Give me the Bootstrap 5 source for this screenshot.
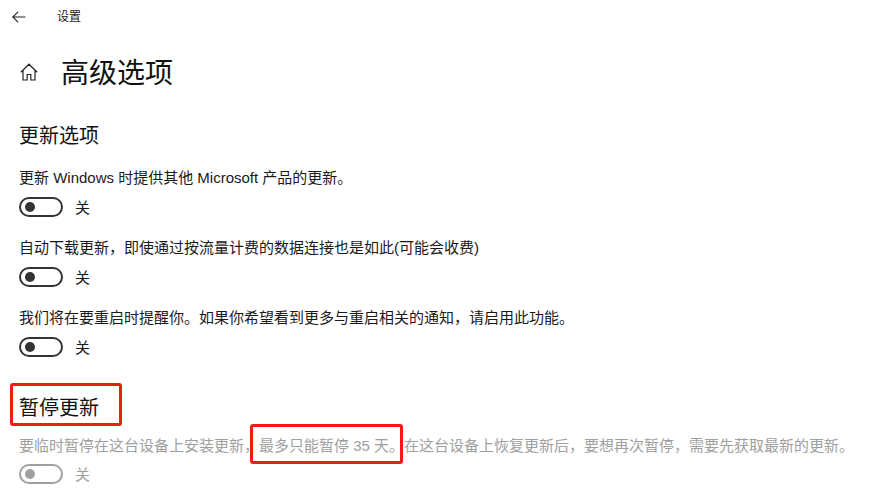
<!DOCTYPE html>
<html lang="zh">
<head>
<meta charset="utf-8">
<title>设置</title>
<link href="https://cdn.jsdelivr.net/npm/bootstrap@5.3.0/dist/css/bootstrap.min.css" rel="stylesheet">
<style>
html,body{height:499px;overflow:hidden;background:#fff}
body{font-family:"Liberation Sans","Noto Sans CJK SC",sans-serif;font-size:15px;color:#1a1a1a;position:relative}
.topbar{height:34px;padding-left:12px}
.topbar span{font-size:12px;margin-left:31px;line-height:34px}
.pagehead{padding-left:20px;height:44px;margin-top:16px}
.pagehead h1{font-size:28px;font-weight:400;margin:0 0 0 23px;padding-top:4px;line-height:44px;color:#111}
.sect{padding-left:19px}
.sect h2{font-size:20px;font-weight:400;line-height:28px;margin:0;color:#111}
.sec-one{margin-top:28px}
.sec-two{margin-top:16px}
.optlist{margin-top:18px}
.optline{line-height:20px;margin:0;white-space:nowrap}
.tgl{width:44px;height:20px;border:2px solid #333;border-radius:10px;display:block;position:relative;flex:none}
.tgl::before{content:"";position:absolute;left:4px;top:3px;width:10px;height:10px;border-radius:50%;background:#333}
.tglrow{gap:12px;height:20px;margin-top:9px}
.tglrow span{padding-top:2px}
.optgroup{height:70px}
.mute{color:#a0a0a0;margin-top:14px}
.mute .tglrow{margin-top:8px}
.mute .tgl{border-color:#a0a0a0}
.mute .tgl::before{background:#a0a0a0}
.redmark{position:absolute;border:3px solid #f01c14;border-radius:3px}
.redmark-a{left:10px;top:383px;width:112px;height:43px}
.redmark-b{left:250px;top:424px;width:153px;height:40px}
</style>
</head>
<body>
<div class="topbar d-flex align-items-center">
<svg width="14" height="12" viewBox="0 0 14 12" fill="none" stroke="#222" stroke-width="1.1" aria-hidden="true"><path d="M13.5 6H1M6 .8 .8 6 6 11.2"/></svg>
<span>设置</span>
</div>
<div class="pagehead d-flex align-items-center">
<svg width="18" height="18" viewBox="0 0 18 18" fill="none" stroke="#222" stroke-width="1.2" aria-hidden="true"><path d="M.8 9.2 9 1.2l8.2 8M3 7.5V17h4.2v-5.5h3.6V17H15V7.5"/></svg>
<h1>高级选项</h1>
</div>
<section class="sect sec-one">
<h2>更新选项</h2>
<div class="optlist">
<div class="optgroup"><p class="optline">更新 Windows 时提供其他 Microsoft 产品的更新。</p><div class="tglrow d-flex align-items-center"><i class="tgl"></i><span>关</span></div></div>
<div class="optgroup"><p class="optline">自动下载更新，即使通过按流量计费的数据连接也是如此(可能会收费)</p><div class="tglrow d-flex align-items-center"><i class="tgl"></i><span>关</span></div></div>
<div class="optgroup"><p class="optline">我们将在要重启时提醒你。如果你希望看到更多与重启相关的通知，请启用此功能。</p><div class="tglrow d-flex align-items-center"><i class="tgl"></i><span>关</span></div></div>
</div>
</section>
<section class="sect sec-two">
<h2>暂停更新</h2>
<div class="mute">
<p class="optline">要临时暂停在这台设备上安装更新，最多只能暂停 35 天。在这台设备上恢复更新后，要想再次暂停，需要先获取最新的更新。</p>
<div class="tglrow d-flex align-items-center"><i class="tgl"></i><span>关</span></div>
</div>
</section>
<div class="redmark redmark-a"></div>
<div class="redmark redmark-b"></div>
<script src="https://cdn.jsdelivr.net/npm/bootstrap@5.3.0/dist/js/bootstrap.bundle.min.js"></script>
</body>
</html>
